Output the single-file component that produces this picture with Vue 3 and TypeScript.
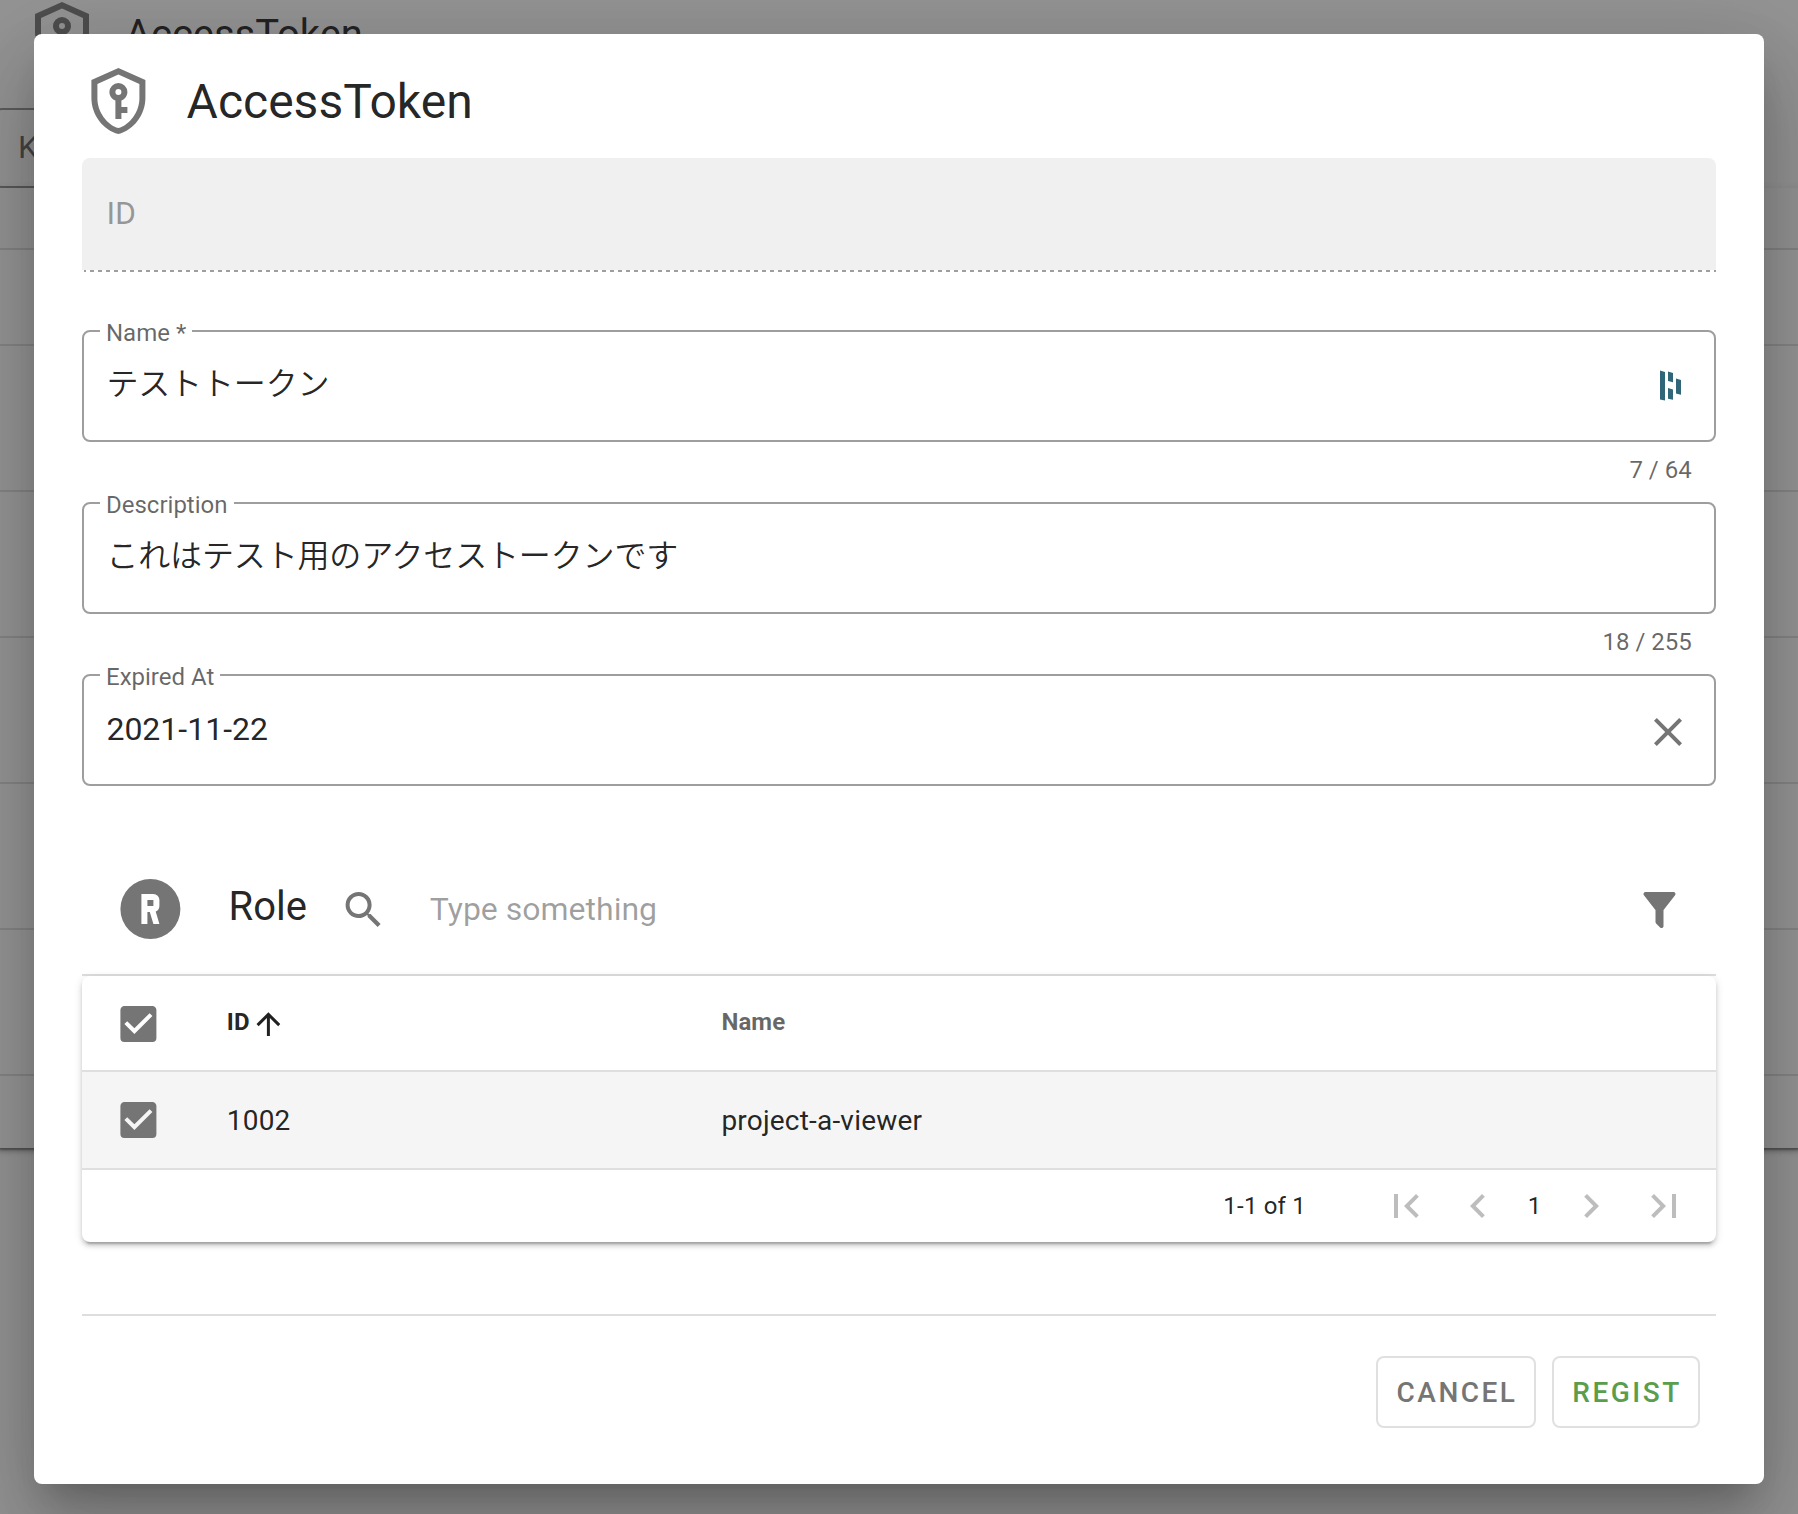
<script setup lang="ts">
import { ref } from 'vue'

interface Role {
  id: number
  name: string
  selected: boolean
}

const icons = {
  token:
    'M21,11C21,16.55 17.16,21.74 12,23C6.84,21.74 3,16.55 3,11V5L12,1L21,5V11M12,21C15.75,20 19,15.54 19,11.22V6.3L12,3.18L5,6.3V11.22C5,15.54 8.25,20 12,21M12,6A3,3 0 0,1 15,9C15,10.31 14.17,11.42 13,11.83V14H15V16H13V18H11V11.83C9.83,11.42 9,10.31 9,9A3,3 0 0,1 12,6M12,8A1,1 0 0,0 11,9A1,1 0 0,0 12,10A1,1 0 0,0 13,9A1,1 0 0,0 12,8Z',
  role:
    'M9,7H13A2,2 0 0,1 15,9V11C15,11.84 14.5,12.55 13.76,12.85L15,17H13L11.8,13H11V17H9V7M11,9V11H13V9H11M12,2A10,10 0 0,1 22,12A10,10 0 0,1 12,22A10,10 0 0,1 2,12A10,10 0 0,1 12,2Z',
  search:
    'M9.5,3A6.5,6.5 0 0,1 16,9.5C16,11.11 15.41,12.59 14.44,13.73L14.71,14H15.5L20.5,19L19,20.5L14,15.5V14.71L13.73,14.44C12.59,15.41 11.11,16 9.5,16A6.5,6.5 0 0,1 3,9.5A6.5,6.5 0 0,1 9.5,3M9.5,5C7,5 5,7 5,9.5C5,12 7,14 9.5,14C12,14 14,12 14,9.5C14,7 12,5 9.5,5Z',
  filter:
    'M14,12V19.88C14.04,20.18 13.94,20.5 13.71,20.71C13.32,21.1 12.69,21.1 12.3,20.71L10.29,18.7C10.06,18.47 9.96,18.16 10,17.87V12H9.97L4.21,4.62C3.87,4.19 3.95,3.56 4.38,3.22C4.57,3.08 4.78,3 5,3V3H19V3C19.22,3 19.43,3.08 19.62,3.22C20.05,3.56 20.13,4.19 19.79,4.62L14.03,12H14Z',
  close:
    'M19,6.41L17.59,5L12,10.59L6.41,5L5,6.41L10.59,12L5,17.59L6.41,19L12,13.41L17.59,19L19,17.59L13.41,12L19,6.41Z',
  checked:
    'M10,17L5,12L6.41,10.58L10,14.17L17.59,6.58L19,8M19,3H5C3.89,3 3,3.89 3,5V19A2,2 0 0,0 5,21H19A2,2 0 0,0 21,19V5C21,3.89 20.1,3 19,3Z',
  arrowUp:
    'M13,20H11V8L5.5,13.5L4.08,12.08L12,4.16L19.92,12.08L18.5,13.5L13,8V20Z',
  first: 'M18.41,16.59L13.82,12L18.41,7.41L17,6L11,12L17,18L18.41,16.59M6,6H8V18H6V6Z',
  prev: 'M15.41,16.58L10.83,12L15.41,7.41L14,6L8,12L14,18L15.41,16.58Z',
  next: 'M8.59,16.58L13.17,12L8.59,7.41L10,6L16,12L10,18L8.59,16.58Z',
  last: 'M5.59,7.41L10.18,12L5.59,16.59L7,18L13,12L7,6L5.59,7.41M16,6H18V18H16V6Z',
}

const name = ref('テストトークン')
const description = ref('これはテスト用のアクセストークンです')
const expiredAt = ref('2021-11-22')
const roles = ref<Role[]>([{ id: 1002, name: 'project-a-viewer', selected: true }])
const page = ref(1)
</script>

<template>
  <div class="app">
    <div class="page">
      <div class="page-head">
        <svg class="icon i72" viewBox="0 0 24 24"><path :d="icons.token" /></svg>
        <span class="page-title">AccessToken</span>
      </div>
      <div class="page-search"><span>Keyword</span></div>
      <div class="page-table">
        <div class="page-row page-row-head"></div>
        <div class="page-row first"></div>
        <div v-for="n in 5" :key="n" class="page-row"></div>
        <div class="page-row page-row-foot"></div>
      </div>
    </div>
    <div class="overlay"></div>

    <div class="dialog">
      <header class="title-row">
        <svg class="icon i72 nudge" viewBox="0 0 24 24"><path :d="icons.token" /></svg>
        <span class="title">AccessToken</span>
      </header>

      <div class="field-disabled">
        <div class="fill"><span>ID</span></div>
        <div class="dashes"></div>
      </div>

      <div class="field">
        <span class="label">Name *</span>
        <span class="value ja">{{ name }}</span>
        <svg class="manager" viewBox="0 0 24 32">
          <path d="M1,0.6L6,2.1V30.6L1,29.6ZM9,1.6L14,3V12.2L9,11ZM9,18L14,19.5V29.8L9,28.8ZM17,8.6L22,10V24.8L17,23.6Z" />
        </svg>
      </div>
      <div class="counter">{{ name.length }} / 64</div>

      <div class="field">
        <span class="label">Description</span>
        <span class="value ja">{{ description }}</span>
      </div>
      <div class="counter">{{ description.length }} / 255</div>

      <div class="field">
        <span class="label">Expired At</span>
        <span class="value">{{ expiredAt }}</span>
        <svg class="icon i48 clear" viewBox="0 0 24 24"><path :d="icons.close" /></svg>
      </div>

      <div class="role-bar">
        <svg class="icon i72 nudge" viewBox="0 0 24 24"><path fill-rule="evenodd" :d="icons.role" /></svg>
        <span class="role-title">Role</span>
        <svg class="icon i48 search" viewBox="0 0 24 24"><path :d="icons.search" /></svg>
        <span class="placeholder">Type something</span>
        <svg class="icon i48 filter" viewBox="0 0 24 24"><path :d="icons.filter" /></svg>
      </div>
      <div class="line"></div>

      <section class="card">
        <div class="row head">
          <div class="cell check"><svg class="icon i48 nudge" viewBox="0 0 24 24"><path :d="icons.checked" /></svg></div>
          <div class="cell id">
            <span>ID</span>
            <svg class="icon arrow nudge" viewBox="0 0 24 24"><path :d="icons.arrowUp" /></svg>
          </div>
          <div class="cell name">Name</div>
        </div>
        <div v-for="role in roles" :key="role.id" class="row" :class="{ selected: role.selected }">
          <div class="cell check"><svg class="icon i48 nudge" viewBox="0 0 24 24"><path :d="icons.checked" /></svg></div>
          <div class="cell id">{{ role.id }}</div>
          <div class="cell name">{{ role.name }}</div>
        </div>
        <div class="pager">
          <span class="range">1-{{ roles.length }} of {{ roles.length }}</span>
          <svg class="icon i48 off" viewBox="0 0 24 24"><path :d="icons.first" /></svg>
          <svg class="icon i48 off prev" viewBox="0 0 24 24"><path :d="icons.prev" /></svg>
          <span class="current">{{ page }}</span>
          <svg class="icon i48 off" viewBox="0 0 24 24"><path :d="icons.next" /></svg>
          <svg class="icon i48 off last" viewBox="0 0 24 24"><path :d="icons.last" /></svg>
        </div>
      </section>

      <div class="line divider"></div>
      <footer class="actions">
        <button class="btn cancel">CANCEL</button>
        <button class="btn regist">REGIST</button>
      </footer>
    </div>
  </div>
</template>

<style>
body {
  margin: 0;
}
</style>

<style scoped>
.app {
  position: relative;
  width: 1798px;
  height: 1514px;
  overflow: hidden;
  box-sizing: border-box;
  background: #f5f5f5;
  color: rgba(0, 0, 0, 0.87);
  font-family: Roboto, 'Noto Sans CJK JP', sans-serif;
}
.app * {
  box-sizing: border-box;
}
.icon {
  display: block;
  flex: none;
  fill: #757575;
}
.i72 {
  width: 72px;
  height: 72px;
}
.i48 {
  width: 48px;
  height: 48px;
}
.nudge {
  transform: translateX(0.4px);
}

/* page behind the dialog */
.page-head {
  display: flex;
  align-items: center;
  height: 72px;
  margin: -1px 0 37px 26px;
}
.page-title {
  margin-left: 27px;
  font-size: 40px;
  line-height: 72px;
  letter-spacing: -0.05px;
}
.page-search {
  width: 1200px;
  height: 80px;
  margin: 0 0 0 -6px;
  padding-left: 22px;
  border: 2px solid rgba(0, 0, 0, 0.42);
  border-radius: 8px;
  font-size: 32px;
  line-height: 74px;
  color: rgba(0, 0, 0, 0.6);
}
.page-table {
  margin: 0 -6px;
  border-radius: 8px;
  box-shadow: 0 6px 2px -4px rgba(0, 0, 0, 0.35), 0 4px 4px 0 rgba(0, 0, 0, 0.18), 0 2px 10px 0 rgba(0, 0, 0, 0.12);
}
.page-row {
  height: 146px;
  border-bottom: 2px solid rgba(0, 0, 0, 0.12);
  background: #f9f9f9;
}
.page-row-head {
  height: 62px;
  background: #f5f5f5;
}
.page-row.first {
  height: 96px;
}
.page-row-foot {
  height: 72px;
  border-bottom: 0;
  border-radius: 0 0 8px 8px;
}
.overlay {
  position: absolute;
  inset: 0;
  background: rgba(33, 33, 33, 0.46);
}

/* dialog */
.dialog {
  position: absolute;
  left: 34px;
  top: 34px;
  width: 1730px;
  height: 1450px;
  padding: 31px 48px 0;
  border-radius: 8px;
  background: #fff;
  box-shadow: 0 22px 30px -14px rgba(0, 0, 0, 0.2), 0 48px 76px 6px rgba(0, 0, 0, 0.14), 0 18px 92px 16px rgba(0, 0, 0, 0.12);
}
.title-row {
  display: flex;
  align-items: center;
  height: 72px;
  margin: 0 0 21px;
}
.title {
  margin-left: 32.6px;
  padding-top: 1px;
  font-size: 48px;
  line-height: 72px;
}
.field-disabled {
  height: 114px;
  margin-bottom: 58px;
}
.fill {
  height: 112px;
  padding-left: 24.4px;
  border-radius: 8px 8px 0 0;
  background: #f0f0f0;
  color: rgba(0, 0, 0, 0.38);
  font-size: 32px;
  line-height: 110px;
}
.dashes {
  height: 2px;
  margin-left: 2px;
  background: repeating-linear-gradient(to right, rgba(0, 0, 0, 0.38) 0, rgba(0, 0, 0, 0.38) 4px, transparent 4px, transparent 8px);
  background-size: 1640px 2px;
  background-position: -2px 0;
}
.field {
  position: relative;
  display: flex;
  align-items: center;
  justify-content: space-between;
  height: 112px;
  padding: 0 22px;
  border: 2px solid #9e9e9e;
  border-radius: 8px;
}
.label {
  position: absolute;
  left: 16px;
  top: -13px;
  padding: 0 6px 0 6px;
  background: #fff;
  color: rgba(0, 0, 0, 0.6);
  font-size: 24px;
  line-height: 28px;
}
.value {
  padding-left: 0.4px;
  font-size: 32px;
  line-height: 106px;
  height: 108px;
}
.ja {
  font-weight: 350;
  line-height: 104px;
  letter-spacing: -0.15px;
}
.manager {
  width: 24px;
  height: 32px;
  margin: 0 9px 0 0;
  fill: #2f6678;
}
.clear {
  margin: 4px 0.5px 0 0;
}
.counter {
  height: 60px;
  padding: 14px 24.3px 0 0;
  text-align: right;
  color: rgba(0, 0, 0, 0.6);
  font-size: 24px;
  line-height: 28px;
}
.role-bar {
  display: flex;
  align-items: center;
  height: 72px;
  margin: 87px 32px 29px;
}
.role-title {
  width: 111px;
  margin-left: 42.6px;
  font-size: 40px;
  line-height: 68px;
  height: 72px;
}
.search,
.filter {
  margin-top: 1px;
}
.search {
  transform: translateX(-0.4px);
}
.filter {
  margin-right: 0.5px;
  transform: translateX(-0.5px);
}
.placeholder {
  flex: 1;
  margin-left: 42.2px;
  color: rgba(0, 0, 0, 0.38);
  font-size: 32px;
  line-height: 72px;
}
.line {
  height: 2px;
  background: #dedede;
}
.card {
  height: 266px;
  border-radius: 8px;
  background: #fff;
  box-shadow: 0 6px 2px -4px rgba(0, 0, 0, 0.2), 0 4px 4px 0 rgba(0, 0, 0, 0.14), 0 2px 10px 0 rgba(0, 0, 0, 0.12);
}
.row {
  display: flex;
  align-items: center;
  height: 98px;
  border-bottom: 2px solid #dfdfdf;
  font-size: 28px;
  letter-spacing: 0.2px;
}
.row.head {
  height: 96px;
  font-size: 24px;
  font-weight: 700;
  letter-spacing: 0.1px;
}
.row.selected {
  background: #f5f5f5;
}
.cell.check {
  width: 144.8px;
  padding-left: 32px;
}
.head .check {
  padding-top: 2px;
}
.cell.id {
  display: flex;
  align-items: center;
  width: 494.6px;
}
.arrow {
  width: 36px;
  height: 36px;
  margin-top: 2px;
  fill: rgba(0, 0, 0, 0.87);
}
.head .name {
  color: rgba(0, 0, 0, 0.6);
}
.head .cell span,
.head .name {
  position: relative;
  top: -1px;
}
.pager {
  display: flex;
  align-items: center;
  justify-content: flex-end;
  height: 72px;
  padding-right: 28.5px;
  font-size: 24px;
}
.range {
  margin-right: 76px;
  letter-spacing: 0.2px;
}
.off {
  fill: #bdbdbd;
}
.prev {
  margin-left: 24px;
}
.current {
  width: 65px;
  text-align: center;
}
.last {
  margin-left: 24.5px;
}
.divider {
  margin-top: 72px;
}
.actions {
  display: flex;
  justify-content: flex-end;
  gap: 16px;
  padding: 40px 16px 0 0;
}
.btn {
  height: 72px;
  padding: 1px 0 0 2px;
  border: 2px solid #e0e0e0;
  border-radius: 8px;
  background: #fff;
  font: 500 28px/67px Roboto, sans-serif;
  letter-spacing: 2.5px;
}
.cancel {
  width: 160px;
  color: #757575;
}
.regist {
  width: 148px;
  color: #5a9e4d;
}
</style>
